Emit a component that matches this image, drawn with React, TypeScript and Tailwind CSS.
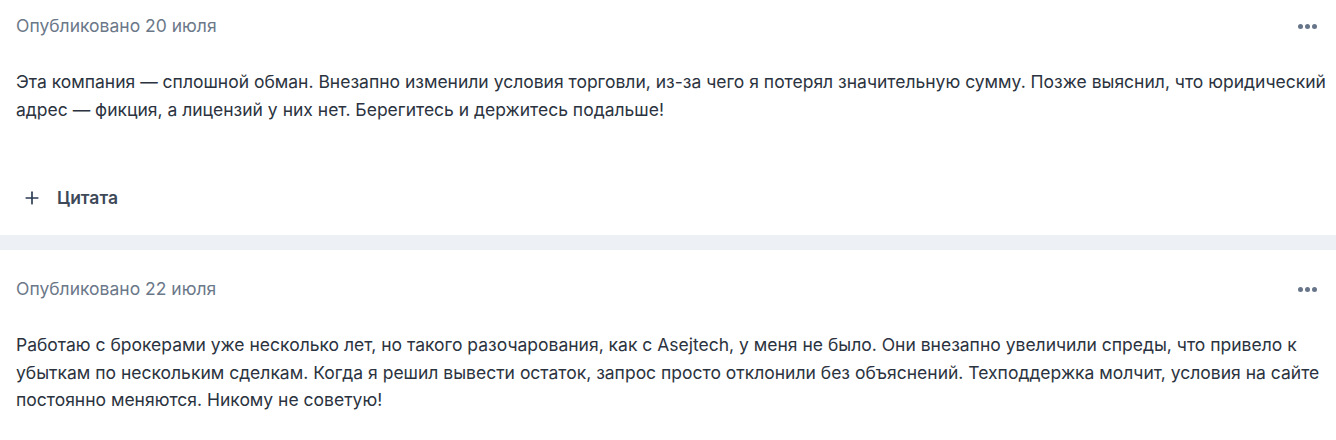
import { Plus } from 'lucide-react';

interface Review {
  id: number;
  date: string;
  text: string;
}

const reviews: Review[] = [
  {
    id: 1,
    date: 'Опубликовано 20 июля',
    text: 'Эта компания — сплошной обман. Внезапно изменили условия торговли, из-за чего я потерял значительную сумму. Позже выяснил, что юридический адрес — фикция, а лицензий у них нет. Берегитесь и держитесь подальше!',
  },
  {
    id: 2,
    date: 'Опубликовано 22 июля',
    text: 'Работаю с брокерами уже несколько лет, но такого разочарования, как с Asejtech, у меня не было. Они внезапно увеличили спреды, что привело к убыткам по нескольким сделкам. Когда я решил вывести остаток, запрос просто отклонили без объяснений. Техподдержка молчит, условия на сайте постоянно меняются. Никому не советую!',
  },
];

function Dots() {
  return (
    <button className="flex items-center gap-[2px] px-1 py-2 text-[#67758a]">
      <span className="h-[5px] w-[5px] rounded-full bg-current" />
      <span className="h-[5px] w-[5px] rounded-full bg-current" />
      <span className="h-[5px] w-[5px] rounded-full bg-current" />
    </button>
  );
}

function ReviewCard({ review, first }: { review: Review; first?: boolean }) {
  return (
    <div className={`bg-white pl-4 pr-[6px] ${first ? 'pt-[15px]' : 'pt-[28px]'}`}>
      <div className="flex items-center justify-between">
        <span className="text-[17.5px] leading-[22px] text-[#6b7889]">{review.date}</span>
        <div className="mr-[9px]">
          <Dots />
        </div>
      </div>
      <p className="mt-[31px] text-[17.5px] leading-[27.5px] text-[#2b3340]">{review.text}</p>
    </div>
  );
}

export default function App() {
  return (
    <div className="min-h-screen bg-white" style={{ fontFamily: 'Inter, "Noto Sans", sans-serif' }}>
      <div className="bg-white pb-[25px]">
        <ReviewCard review={reviews[0]} first />
        <button className="mt-[63px] flex items-center gap-[15px] px-[22px] text-[17.5px] font-semibold leading-[24px] text-[#3d4858]">
          <Plus className="h-5 w-5 text-[#2b3b52]" strokeWidth={2} />
          Цитата
        </button>
      </div>
      <div className="h-[15px] bg-[#edf1f5]" />
      <ReviewCard review={reviews[1]} />
    </div>
  );
}
